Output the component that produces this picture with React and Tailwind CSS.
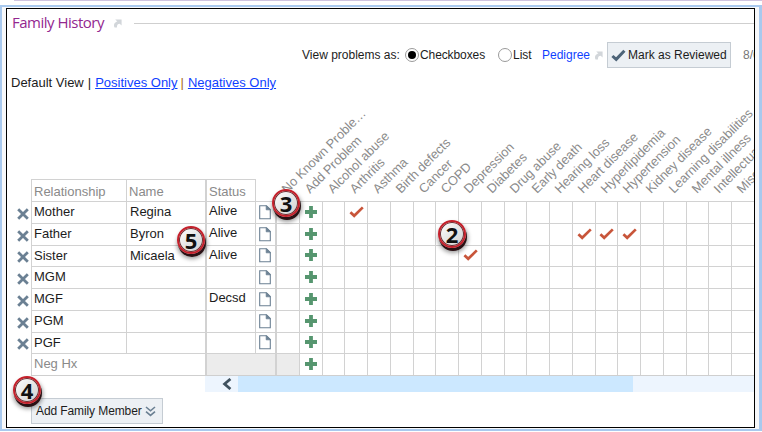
import React from "react";

const problems = [
  "No Known Proble…", "Add Problem", "Alcohol abuse", "Arthritis", "Asthma", "Birth defects", "Cancer", "COPD",
  "Depression", "Diabetes", "Drug abuse", "Early death", "Hearing loss", "Heart disease", "Hyperlipidemia",
  "Hypertension", "Kidney disease", "Learning disabilities", "Mental illness", "Intellectual disability", "Miscarriages",
];

const members = [
  { rel: "Mother", name: "Regina", status: "Alive", checks: [3] },
  { rel: "Father", name: "Byron", status: "Alive", checks: [13, 14, 15] },
  { rel: "Sister", name: "Micaela", status: "Alive", checks: [8] },
  { rel: "MGM", name: "", status: "", checks: [] },
  { rel: "MGF", name: "", status: "Decsd", checks: [] },
  { rel: "PGM", name: "", status: "", checks: [] },
  { rel: "PGF", name: "", status: "", checks: [] },
];

const line = "border-[#d2d2d2]";

function ArrowIcon() {
  return (
    <svg width="9" height="9" viewBox="0 0 9 9" className="shrink-0">
      <path d="M2.2 0.4H8.6V6.6L6.7 4.8C4.9 4.8 3.9 5.8 3.9 8.6H1.6C0.2 6 1.4 3.2 4.4 2.5Z" fill="#d2d6da" />
    </svg>
  );
}

function Cross() {
  return (
    <svg width="12" height="12" viewBox="0 0 12 12">
      <path d="M1.2 1.2L10.8 10.8M10.8 1.2L1.2 10.8" stroke="#6b8093" strokeWidth="2.8" />
    </svg>
  );
}

function Doc() {
  return (
    <svg width="12" height="15" viewBox="0 0 12 15">
      <path d="M0.7 0.7H7.5L11.3 4.5V13.8H0.7Z" fill="#fff" stroke="#6b8093" strokeWidth="1.1" />
      <path d="M7.2 0.7V4.8H11.3Z" fill="#6b8093" stroke="#6b8093" strokeWidth="0.8" />
    </svg>
  );
}

function Plus() {
  return (
    <svg width="12" height="12" viewBox="0 0 12 12">
      <path d="M6 0V12M0 6H12" stroke="#56966f" strokeWidth="3.8" />
    </svg>
  );
}

function Check() {
  return (
    <svg width="15" height="12" viewBox="0 0 15 12" className="ml-px">
      <path d="M1.4 6.2L5.2 9.8L13.8 1.4" fill="none" stroke="#c8553a" strokeWidth="2.7" />
    </svg>
  );
}

function Radio({ on }) {
  return (
    <span className="flex h-[14px] w-[14px] shrink-0 items-center justify-center rounded-full border border-[#9a9a9a] bg-white">
      {on && <span className="h-2 w-2 rounded-full bg-black" />}
    </span>
  );
}

function Badge({ n, place }) {
  return (
    <div
      className={
        "absolute flex h-7 w-7 items-center justify-center rounded-full border-2 border-[#c4202b] bg-linear-to-br from-white to-[#cfcfcf] shadow-[inset_0_0_0_1px_#6b3034,1px_3px_0_0_#2a1114,1px_4px_4px_1px_rgba(0,0,0,0.4)] " + place
      }
    >
      <span className="font-['Open_Sans',sans-serif] text-[22px] leading-none font-bold text-[#111]">{n}</span>
    </div>
  );
}

function Member({ m }) {
  return (
    <div className="flex h-[21.75px] text-[13px] leading-[19px]">
      <div className="flex w-6 shrink-0 items-end justify-end pr-[2px] pb-[3px]"><Cross /></div>
      <div className={"w-[95px] shrink-0 border-t border-l pl-[2px] " + line}>{m.rel}</div>
      <div className={"w-[79px] shrink-0 border-t border-l pl-[3px] " + line}>{m.name}</div>
      <div className={"w-[50px] shrink-0 border-t border-l-2 pl-[2px] leading-[17px] " + line}>{m.status}</div>
      <div className={"flex w-[20px] shrink-0 items-center justify-center border-t border-l pr-[2px] " + line}><Doc /></div>
      <div className={"w-[23.8px] shrink-0 border-t border-l-2 " + line} />
      {problems.slice(1).map((p, i) => (
        <div key={p} className={"flex w-[22.75px] shrink-0 items-center justify-center border-t border-l pb-px " + line}>
          {i === 0 && <Plus />}
          {m.checks.includes(i + 1) && <Check />}
        </div>
      ))}
    </div>
  );
}

export default function App() {
  return (
    <div className="relative h-[432px] w-[762px] overflow-hidden bg-white font-['Liberation_Sans',Arial,sans-serif] text-[#1c1c1c]">
      <div className="ml-[14px] h-px bg-[#cfc4e0]" />
      <div className="mt-1 h-[426px] border-y-2 border-r-[3px] border-l-2 border-[#a9c9ee] bg-[#f7f8fa] pt-px pl-1">
        <div className="h-[420px] w-[749px] overflow-hidden border border-black bg-white">
          <div className="flex h-7 items-center pl-[5px]">
            <h1 className="w-[101px] pb-px font-['Open_Sans',sans-serif] text-[15px] tracking-[-0.5px] whitespace-nowrap text-[#93278f]">Family History</h1>
            <ArrowIcon />
            <div className="ml-3 h-px flex-1 bg-[#cfcfcf]" />
          </div>

          <div className="mt-[5px] flex h-[26px] items-center pl-[295px] text-[12px] whitespace-nowrap">
            <span className="w-[103px] shrink-0">View problems as:</span>
            <Radio on />
            <span className="ml-px w-[78px] shrink-0 -tracking-[0.1px]">Checkboxes</span>
            <Radio />
            <span className="ml-px w-[29px] shrink-0">List</span>
            <span className="w-[52px] shrink-0 text-[#0f3fff]">Pedigree</span>
            <ArrowIcon />
            <button className="ml-1 flex h-[26px] w-[124px] shrink-0 items-center border border-[#c5ccd3] bg-[#ecf0f4] pl-[3px]">
              <svg width="15" height="13" viewBox="0 0 15 13">
                <path d="M1.4 7L5.2 10.4L13.4 1.8" fill="none" stroke="#4d6478" strokeWidth="3" />
              </svg>
              <span className="ml-[2px]">Mark as Reviewed</span>
            </button>
            <span className="ml-3 text-[#777]">8/6/2020</span>
          </div>

          <div className="mt-[5px] flex h-5 items-center gap-[4px] pl-1 text-[13px] whitespace-nowrap">
            <span>Default View</span>
            <span>|</span>
            <a className="text-[#0f3fff] underline">Positives Only</a>
            <span className="-ml-px text-[#a86a1c]">|</span>
            <a className="text-[#0f3fff] underline">Negatives Only</a>
          </div>

          <div className="flex h-[108px] items-end text-[13px] leading-[23px] text-[#8a8a8a]">
            <div className={"ml-6 h-[22px] w-[95px] shrink-0 border-t border-l pl-[2px] " + line}>Relationship</div>
            <div className={"h-[22px] w-[79px] shrink-0 border-t border-l pl-[2px] " + line}>Name</div>
            <div className={"h-[22px] w-[51px] shrink-0 border-t border-r border-l-2 pl-[2px] " + line}>Status</div>
            <div className="w-[20px] shrink-0" />
            {problems.map((p) => (
              <div key={p} className="h-[22px] w-[22.75px] shrink-0">
                <span className="mt-[3px] ml-[13px] block h-[14px] w-0 origin-bottom-left -rotate-45 text-[12.85px] leading-[14px] whitespace-nowrap">{p}</span>
              </div>
            ))}
          </div>

          {members.map((m) => <Member key={m.rel} m={m} />)}

          <div className="flex h-[21.75px] text-[13px] leading-[19px] text-[#8a8a8a]">
            <div className="w-6 shrink-0" />
            <div className={"w-[174px] shrink-0 border-t border-l pl-[2px] " + line}>Neg Hx</div>
            <div className={"w-[70px] shrink-0 border-t border-l-2 bg-[#ececec] " + line} />
            <div className={"w-[23.8px] shrink-0 border-t border-l-2 bg-[#ececec] " + line} />
            {problems.slice(1).map((p, i) => (
              <div key={p} className={"flex w-[22.75px] shrink-0 items-center justify-center border-t border-l pb-px " + line}>
                {i === 0 && <Plus />}
              </div>
            ))}
          </div>

          <div className="ml-6 h-px w-[730px] bg-[#cfcfcf]" />
          <div className="ml-[198px] flex h-4 bg-[#edf5fe]">
            <div className="flex w-[33px] items-center justify-center pl-[10px]">
              <svg width="10" height="12" viewBox="0 0 10 12">
                <path d="M8.4 1L2.6 6L8.4 11" fill="none" stroke="#40525f" strokeWidth="2.8" />
              </svg>
            </div>
            <div className="w-[395px] bg-[#cce8ff]" />
          </div>

          <button className="mt-[6px] ml-6 flex h-[26px] w-[132px] items-center border border-[#c5ccd3] bg-[#ecf0f4] pl-1 text-[12px] whitespace-nowrap">
            <span className="w-[109px] text-left -tracking-[0.1px]">Add Family Member</span>
            <svg width="11" height="11" viewBox="0 0 11 11">
              <path d="M1 1L5.5 4.8L10 1M1 5.6L5.5 9.4L10 5.6" fill="none" stroke="#6b8093" strokeWidth="1.6" />
            </svg>
          </button>
        </div>
      </div>

      <Badge n="2" place="left-[438px] top-[220px]" />
      <Badge n="3" place="left-[272px] top-[189px]" />
      <Badge n="4" place="left-[13px] top-[376px]" />
      <Badge n="5" place="left-[177px] top-[226px]" />
    </div>
  );
}
